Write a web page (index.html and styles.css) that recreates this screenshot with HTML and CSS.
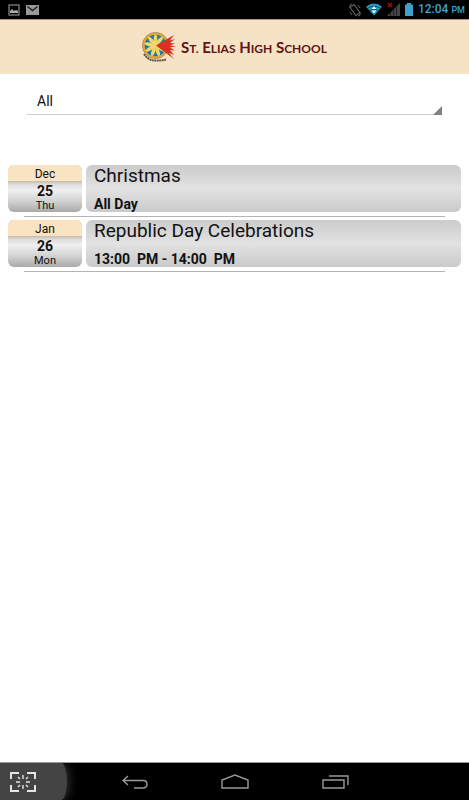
FILE: index.html
```
<!DOCTYPE html>
<html lang="en">
<head>
  <meta charset="UTF-8" />
  <meta name="viewport" content="width=device-width, initial-scale=1.0" />
  <title>St. Elias High School | Events</title>
  <link rel="stylesheet" href="styles.css">
</head>
<body>
  <div class="status-bar">
    <div class="status-group">
      <svg width="12" height="12" viewBox="0 0 12 12"><rect x="1" y="1" width="10" height="10" fill="none" stroke="#777" stroke-width="1.4"/><path d="M2 9V7l2-2 2 2 2-1 2 1v2z" fill="#aaa"/></svg>
      <svg width="13" height="10" viewBox="0 0 13 10"><path d="M0 0h13v10H0z" fill="#999"/><path d="M1.500 1.500l5 4 5-4" fill="none" stroke="#222" stroke-width="1.600"/></svg>
    </div>
    <div class="status-group">
      <svg width="12" height="14" viewBox="0 0 12 14"><g fill="none" stroke="#666"><rect x="3.500" y="2" width="5" height="10" transform="rotate(-35 6 7)"/><path d="M1 5V2l2-1M11 9v3l-2 1M1 9l2 3M9 2l2 3"/></g></svg>
      <svg width="16" height="13" viewBox="0 0 17 13"><path d="M0 3.500Q8.500-3 17 3.500L8.500 13z" fill="#299bc5"/><path d="M2 5q6.500-4 13 0M4 7.500q4.500-3 9 0" fill="none" stroke="#06202a" stroke-width=".7"/><path d="M8.500 3l2.500 3H6zM6 7.500h5l-2.500 3z" fill="#fff"/></svg>
      <svg width="13" height="13" viewBox="0 0 13 13"><path d="M13 0v13H0z" fill="#444"/><path d="M3.500 9v4M6.500 6v7M9.500 3v10" stroke="#222"/><path d="M1 0l4 4M5 0L1 4" stroke="#b01010" stroke-width="1.200"/></svg>
      <svg width="8" height="13" viewBox="0 0 8 13"><path d="M2 0h4v1.500h2V13H0V1.500h2z" fill="#3fa0cb"/></svg>
      <span class="clock">12:04 <small>PM</small></span>
    </div>
  </div>

  <header class="header">
    <svg width="36" height="32" viewBox="0 0 36 32">
      <circle cx="13.500" cy="13.500" r="13.200" fill="#efaa2e"/>
      <circle cx="13.500" cy="13.500" r="13" fill="none" stroke="#9b8a60" stroke-width=".8"/>
      <circle cx="13.500" cy="13.500" r="10.800" fill="#1979b4"/>
      <g fill="#f3d568">
        <ellipse cx="13.500" cy="7" rx="1.800" ry="4.500"/>
        <ellipse cx="13.500" cy="7" rx="1.800" ry="4.500" transform="rotate(-40 13.500 13.500)"/>
        <ellipse cx="13.500" cy="7" rx="1.800" ry="4.500" transform="rotate(-80 13.500 13.500)"/>
        <ellipse cx="13.500" cy="7" rx="1.800" ry="4.500" transform="rotate(-120 13.500 13.500)"/>
        <ellipse cx="13.500" cy="7" rx="1.800" ry="4.500" transform="rotate(-160 13.500 13.500)"/>
        <ellipse cx="13.500" cy="7" rx="1.800" ry="4.500" transform="rotate(160 13.500 13.500)"/>
        <ellipse cx="13.500" cy="7" rx="1.800" ry="4.500" transform="rotate(40 13.500 13.500)"/>
        <ellipse cx="13.500" cy="7" rx="1.800" ry="4.500" transform="rotate(120 13.500 13.500)"/>
        <circle cx="13.500" cy="13.500" r="3"/>
      </g>
      <path d="M14 13.500L32 3l-4 5.500 5-1.500-5 4 5 .5-5 2 6 1-6 1 5 3-5-.5 4 5-5-2 5 6z" fill="#d93222"/>
      <path d="M2 22q4 6 10 6.500t12-1" fill="none" stroke="#5d5142" stroke-width="2" stroke-dasharray="2 .5"/>
    </svg>
    <h1 class="school-name">S<span>t.</span> E<span>lias</span> H<span>igh</span> S<span>chool</span></h1>
  </header>

  <main class="content">
    <div class="filter">
      <select class="filter-select" aria-label="Event filter">
        <option>All</option>
      </select>
    </div>

    <ul class="events">
      <li class="event">
        <div class="date">
          <span class="month">Dec</span>
          <span class="day">25</span>
          <span class="weekday">Thu</span>
        </div>
        <div class="details">
          <h2>Christmas</h2>
          <p>All Day</p>
        </div>
      </li>
      <li class="event">
        <div class="date">
          <span class="month">Jan</span>
          <span class="day">26</span>
          <span class="weekday">Mon</span>
        </div>
        <div class="details">
          <h2>Republic Day Celebrations</h2>
          <p>13:00&nbsp; PM - 14:00&nbsp; PM</p>
        </div>
      </li>
    </ul>
  </main>

  <nav class="nav-bar">
    <button class="capture" aria-label="Screenshot">
      <svg width="26" height="20" viewBox="0 0 26 20"><g fill="none" stroke="#e4e4e4"><path d="M1 7V1h8M17 1h8v6M25 13v6h-8M9 19H1v-6" stroke-width="2"/><path d="M13 3v4M13 13v4M6 10h4M16 10h4M8 5l2 2M18 5l-2 2M8 15l2-2M18 15l-2-2" stroke-width="1.400"/></g></svg>
    </button>
    <div class="nav-keys">
      <button aria-label="Back">
        <svg width="26" height="14" viewBox="0 0 26 14"><path d="M6 1L1 5.500 6 10M1 5.500h20q4 0 4 3.700T21 13h-9" fill="none" stroke="#999" stroke-width="1.400"/></svg>
      </button>
      <button aria-label="Home">
        <svg width="28" height="15" viewBox="0 0 28 15"><path d="M1 14V6l13-5 13 5v8z" fill="none" stroke="#999" stroke-width="1.400"/></svg>
      </button>
      <button aria-label="Recent apps">
        <svg width="27" height="14" viewBox="0 0 27 14"><path d="M1 5h21v8H1zM7 1h19v9" fill="none" stroke="#999" stroke-width="1.400"/></svg>
      </button>
    </div>
  </nav>
</body>
</html>
```
FILE: styles.css
```
* { box-sizing: border-box; margin: 0; padding: 0; }
body {
  display: flex;
  flex-direction: column;
  min-height: 100vh;
  font-family: Roboto, sans-serif;
  background: #fff;
  color: #111;
}
svg { display: block; flex-shrink: 0; }
button { border: 0; background: none; cursor: pointer; }

/* Status bar */
.status-bar {
  display: flex;
  justify-content: space-between;
  align-items: center;
  height: 19px;
  padding: 0 4px 0 8px;
  background: #000;
}
.status-group {
  display: flex;
  align-items: center;
  gap: 5px;
}
.status-group:first-child { gap: 6px; }
.clock {
  font-size: 12px;
  font-weight: 500;
  line-height: 19px;
  color: #33a5d6;
}
.clock small { font-size: 9px; }

/* School header */
.header {
  display: flex;
  justify-content: center;
  align-items: center;
  gap: 3px;
  height: 55px;
  padding-top: 2px;
  border-top: 1px solid #a39784;
  background: #f6e3c5;
}
.school-name {
  font-family: Lato, sans-serif;
  font-size: 15px;
  font-weight: 700;
  line-height: 20px;
  color: #601414;
}
.school-name span {
  font-size: 12px;
  text-transform: uppercase;
}

/* Filter */
.content { flex: 1; }
.filter {
  position: relative;
  margin: 14px 27px 50px;
}
.filter::after {
  content: "";
  position: absolute;
  right: 0;
  bottom: 0;
  border-left: 9px solid transparent;
  border-bottom: 9px solid #808080;
  pointer-events: none;
}
.filter-select {
  display: block;
  width: 100%;
  height: 27px;
  padding: 0 10px;
  border: 0;
  border-bottom: 1px solid #ccc;
  border-radius: 0;
  appearance: none;
  background: none;
  font-family: inherit;
  font-size: 14px;
  color: #111;
}

/* Events */
.events {
  list-style: none;
  padding: 0 8px;
}
.event {
  display: grid;
  grid-template-columns: 74px 1fr;
  column-gap: 4px;
  margin-bottom: 3px;
}
.event::after {
  content: "";
  grid-column: 1 / -1;
  height: 1px;
  margin: 4px 16px 0;
  background: #b4b4b4;
}
.date,
.details {
  height: 47px;
  border-radius: 6px;
}
.date {
  display: flex;
  flex-direction: column;
  overflow: hidden;
  text-align: center;
  background: linear-gradient(#bcb09d 15px, #dcdad8 19px, #f0f0f0 25px, #d2d2d2 36px, #a9a9a9);
}
.month {
  height: 16px;
  font-size: 12px;
  line-height: 18px;
  background: #f9e3c0;
}
.day {
  font-size: 14px;
  font-weight: 700;
  line-height: 20px;
}
.weekday {
  font-size: 11px;
  line-height: 10px;
}
.details {
  padding: 0 8px;
  background: linear-gradient(#cbcbcb, #e2e2e2 50%, #cacaca);
}
.details h2 {
  font-size: 19px;
  font-weight: 400;
  line-height: 22px;
}
.details p {
  margin-top: 8px;
  font-size: 14px;
  font-weight: 700;
  line-height: 18px;
}

/* System navigation */
.nav-bar {
  display: flex;
  height: 38px;
  border-top: 1px solid #999;
  background: #000;
  overflow: hidden;
}
.capture {
  width: 67px;
  padding-left: 10px;
  border-radius: 0 6px 6px 0 / 0 19px 19px 0;
  background: #444;
  box-shadow: 2px 0 10px #333;
}
.nav-keys {
  flex: 1;
  display: flex;
  justify-content: center;
  align-items: center;
  gap: 73px;
  padding-right: 66px;
}
```
